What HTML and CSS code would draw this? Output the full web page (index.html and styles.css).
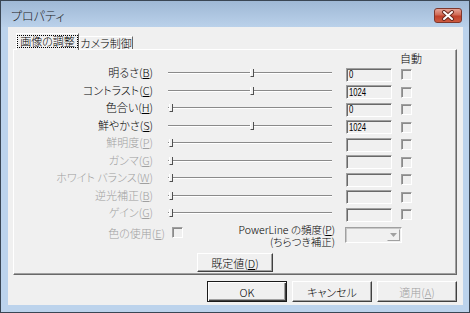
FILE: index.html
```html
<!DOCTYPE html>
<html lang="ja">
<head>
<meta charset="utf-8">
<title>プロパティ</title>
<link rel="stylesheet" href="styles.css">
</head>
<body>
<div class="win">
  <div class="titlebar">
    <span class="title">プロパティ</span>
    <span class="close">
      <svg width="14" height="11" viewBox="0 0 14 11">
        <path d="M3 2 L11 9 M11 2 L3 9" stroke="#6b2a20" stroke-width="4" stroke-linecap="round"/>
        <path d="M3 2 L11 9 M11 2 L3 9" stroke="#ffffff" stroke-width="2" stroke-linecap="round"/>
      </svg>
    </span>
  </div>
  <div class="frame">
    <div class="client">
      <div class="tabs">
        <div class="tab sel"><span class="focus">画像の調整</span></div>
        <div class="tab">カメラ制御</div>
      </div>
      <div class="panel">
        <div class="grid">
          <div></div><div></div><div></div><div class="hdr">自動</div>

          <div class="lbl">明るさ(<u>B</u>)</div>
          <div class="slider"><div class="track"><span class="thumb" style="left:82px"></span></div></div>
          <div class="cell"><div class="edit"><span class="num">0</span></div></div>
          <div class="cell"><span class="chk"></span></div>

          <div class="lbl">コントラスト(<u>C</u>)</div>
          <div class="slider"><div class="track"><span class="thumb" style="left:82px"></span></div></div>
          <div class="cell"><div class="edit"><span class="num">1024</span></div></div>
          <div class="cell"><span class="chk"></span></div>

          <div class="lbl">色合い(<u>H</u>)</div>
          <div class="slider"><div class="track"><span class="thumb" style="left:1px"></span></div></div>
          <div class="cell"><div class="edit"><span class="num">0</span></div></div>
          <div class="cell"><span class="chk"></span></div>

          <div class="lbl">鮮やかさ(<u>S</u>)</div>
          <div class="slider"><div class="track"><span class="thumb" style="left:82px"></span></div></div>
          <div class="cell"><div class="edit"><span class="num">1024</span></div></div>
          <div class="cell"><span class="chk"></span></div>

          <div class="lbl dis">鮮明度(<u>P</u>)</div>
          <div class="slider"><div class="track"><span class="thumb" style="left:1px"></span></div></div>
          <div class="cell"><div class="edit"></div></div>
          <div class="cell"><span class="chk"></span></div>

          <div class="lbl dis">ガンマ(<u>G</u>)</div>
          <div class="slider"><div class="track"><span class="thumb" style="left:1px"></span></div></div>
          <div class="cell"><div class="edit"></div></div>
          <div class="cell"><span class="chk"></span></div>

          <div class="lbl dis">ホワイト バランス(<u>W</u>)</div>
          <div class="slider"><div class="track"><span class="thumb" style="left:1px"></span></div></div>
          <div class="cell"><div class="edit"></div></div>
          <div class="cell"><span class="chk"></span></div>

          <div class="lbl dis">逆光補正(<u>B</u>)</div>
          <div class="slider"><div class="track"><span class="thumb" style="left:1px"></span></div></div>
          <div class="cell"><div class="edit"></div></div>
          <div class="cell"><span class="chk"></span></div>

          <div class="lbl dis">ゲイン(<u>G</u>)</div>
          <div class="slider"><div class="track"><span class="thumb" style="left:1px"></span></div></div>
          <div class="cell"><div class="edit"></div></div>
          <div class="cell"><span class="chk"></span></div>
        </div>

        <div class="opts">
          <div class="coloruse">
            <span class="dis">色の使用(<u>E</u>)</span>
            <span class="chk"></span>
          </div>
          <div class="power">
            <div class="pl">PowerLine の頻度(<u>P</u>)</div>
            <div class="pl">(ちらつき補正)</div>
          </div>
          <div class="combo"><span class="arrow"><svg width="7" height="4" viewBox="0 0 7 4"><path d="M0 0 H7 L3.5 4 Z" fill="#a0a0a0"/></svg></span></div>
        </div>
        <div class="defrow"><button class="btn def">既定値(<u>D</u>)</button></div>
      </div>
      <div class="btns">
        <button class="btn dflt">OK</button>
        <button class="btn">キャンセル</button>
        <button class="btn off">適用(<u>A</u>)</button>
      </div>
    </div>
  </div>
</div>
</body>
</html>
```

FILE: styles.css
```css
* { box-sizing: border-box; margin: 0; padding: 0; }
html, body { width: 470px; height: 313px; overflow: hidden; }
body {
  font-family: "Noto Sans CJK JP", "Noto Sans", sans-serif;
  font-size: 11px;
  font-weight: 300;
  color: #000;
  font-feature-settings: "palt";
  background: #2b4c7a;
}
u { text-decoration: underline; text-underline-offset: 1px; }

.win {
  width: 470px;
  height: 313px;
  border: 1px solid #3a4654;
  background: #bcd3ec;
  display: flex;
  flex-direction: column;
}
.titlebar {
  height: 26px;
  flex: none;
  display: flex;
  justify-content: space-between;
  align-items: flex-start;
  padding: 0 7px 0 10px;
  background: linear-gradient(#9fb8d5, #bad1ea);
}
.title {
  font-size: 12px;
  line-height: 14px;
  margin-top: 8px;
  color: #1c1c1c;
}
.close {
  width: 28px;
  height: 15px;
  margin-top: 7px;
  border: 1px solid #7e372c;
  border-radius: 3px;
  background: linear-gradient(#e7a497, #d06a55 45%, #c0402a 55%, #cc5a40);
  display: flex;
  align-items: center;
  justify-content: center;
}
.close svg { display: block; }

.frame { flex: 1; padding: 0 6px 7px 7px; }
.client {
  width: 455px;
  height: 278px;
  background: #f0f0f0;
  padding: 6px 6px 0 5px;
}

.tabs {
  display: flex;
  align-items: flex-end;
  height: 16px;
  margin-left: 3px;
  position: relative;
  z-index: 1;
}
.tab {
  height: 13px;
  width: 54px;
  border: 1px solid;
  border-color: #fff #696969 transparent #fff;
  border-bottom: none;
  line-height: 12px;
  text-align: center;
  background: #f0f0f0;
}
.tab.sel {
  width: 63px;
  height: 17px;
  margin-bottom: -1px;
  padding-top: 1px;
}
.focus {
  display: block;
  height: 13px;
  line-height: 12px;
  outline: 1px dotted #000;
  outline-offset: -1px;
}

.panel {
  width: 444px;
  height: 226px;
  border: 1px solid;
  border-color: #fff #696969 #696969 #fff;
  box-shadow: inset -1px -1px #a0a0a0;
}

.grid {
  display: grid;
  grid-template-columns: 140px 192px 55px 40px;
  grid-template-rows: 14px repeat(9, 17.5px);
  margin-top: 2px;
}
.hdr { line-height: 12px; margin-left: -1px; white-space: nowrap; }
.lbl {
  text-align: right;
  line-height: 12px;
  padding-right: 1px;
  white-space: nowrap;
}
.dis { color: #a0a0a0; }

.slider { padding: 6px 14px 0; }
.track {
  position: relative;
  height: 2px;
  border-top: 1px solid #8a8a8a;
  border-bottom: 1px solid #fff;
}
.thumb {
  position: absolute;
  top: -4px;
  width: 4px;
  height: 8px;
  background: #f0f0f0;
  border-left: 1px solid #fff;
  border-right: 1px solid #505050;
  border-bottom: 1px solid #505050;
}

.cell { display: flex; align-items: center; }
.edit {
  width: 46px;
  height: 14px;
  border: 1px solid;
  border-color: #a0a0a0 #fff #fff #a0a0a0;
  box-shadow: inset 1px 1px #696969;
  background: #f0f0f0;
  padding-left: 2px;
  display: flex;
  align-items: center;
}
.num {
  display: block;
  font-family: "Liberation Sans", Arial, sans-serif;
  font-weight: 400;
  font-size: 11px;
  line-height: 11px;
  transform: scaleX(0.7);
  transform-origin: left center;
}
.chk {
  display: block;
  width: 11px;
  height: 11px;
  border: 1px solid;
  border-color: #a0a0a0 #fff #fff #a0a0a0;
  box-shadow: inset 1px 1px #8a8a8a;
  background: #f0f0f0;
}

.opts {
  display: flex;
  align-items: flex-start;
  height: 24px;
  margin-top: 3.5px;
}
.coloruse {
  width: 169px;
  display: flex;
  justify-content: flex-end;
  align-items: flex-start;
  gap: 7px;
  line-height: 12px;
}
.power {
  width: 152px;
  text-align: right;
  margin-top: -3px;
  white-space: nowrap;
  font-size: 10.5px;
}
.pl { line-height: 12px; }
.combo {
  margin-left: 10px;
  width: 57px;
  height: 16px;
  border: 1px solid;
  border-color: #a0a0a0 #fff #fff #a0a0a0;
  box-shadow: inset 1px 1px #c8c8c8;
  background: #f0f0f0;
  display: flex;
  justify-content: flex-end;
  padding: 1px;
}
.arrow {
  width: 13px;
  height: 12px;
  border: 1px solid;
  border-color: #f0f0f0 #a0a0a0 #a0a0a0 #f0f0f0;
  display: flex;
  align-items: center;
  justify-content: center;
}
.arrow svg { display: block; }

.defrow { margin: 2px 0 0 183px; }

.btn {
  font-family: "Noto Sans CJK JP", "Noto Sans", sans-serif;
  font-feature-settings: "palt";
  font-size: 11px;
  font-weight: 300;
  color: #000;
  background: #f0f0f0;
  border: 1px solid;
  border-color: #fff #404040 #404040 #fff;
  box-shadow: inset -1px -1px #a0a0a0;
  line-height: 12px;
  display: flex;
  align-items: center;
  justify-content: center;
}
.btn.def { width: 76px; height: 19px; }
.btns {
  display: flex;
  gap: 5px;
  margin: 6px 0 0 194px;
}
.btns .btn { width: 80px; height: 21px; }
.btn.dflt {
  border: 1px solid #1a1a1a;
  box-shadow: inset 1px 1px #fff, inset -1px -1px #404040, inset -2px -2px #a0a0a0;
}
.btn.off { color: #a0a0a0; }
```
